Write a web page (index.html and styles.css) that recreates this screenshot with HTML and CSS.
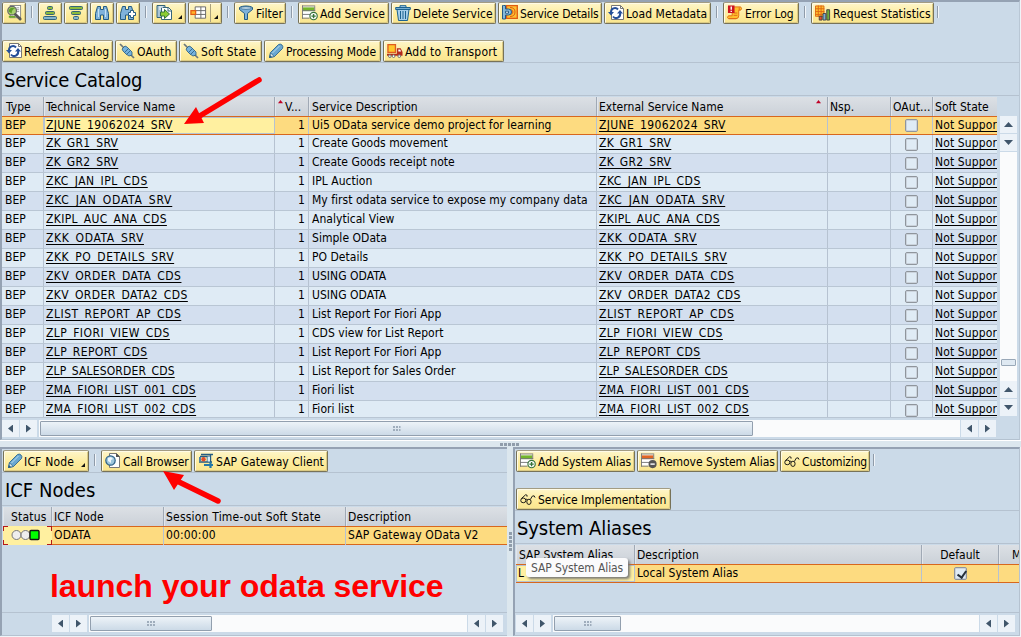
FILE: index.html
```html
<!DOCTYPE html>
<html lang="en">
<head>
<meta charset="utf-8">
<title>Service Catalog</title>
<link rel="stylesheet" href="styles.css">
</head>
<body>
<svg class="defs" width="0" height="0">
  <symbol id="details" viewBox="0 0 17 17"><rect x="4.500" y=".5" width="11" height="13" fill="#fff" stroke="#888"/><path d="M11 3h3M11 5h3M11 7h3" stroke="#999"/><path d="M3 12.500h7" stroke="#6aa829" stroke-width="2"/><circle cx="6.500" cy="6" r="4.600" fill="#a8d070" stroke="#666" stroke-width="1.300"/><path d="M3 7q0-4 4-4l3 1q-4 0-4 5z" fill="#5e9e28"/><path d="M10 10l5 5" stroke="#555" stroke-width="3" stroke-linecap="round"/></symbol>
  <symbol id="asc" viewBox="0 0 16 16"><g fill="#8cbb3b" stroke="#35657a"><rect x="5.500" y="1.500" width="5" height="3" rx="1"/><rect x="3.500" y="6.500" width="9" height="3" rx="1"/><rect x="1.500" y="11.500" width="13" height="3" rx="1" fill="#86b4cd"/></g></symbol>
  <symbol id="desc" viewBox="0 0 16 16"><g fill="#8cbb3b" stroke="#35657a"><rect x="1.500" y="1.500" width="13" height="3" rx="1"/><rect x="3.500" y="6.500" width="9" height="3" rx="1"/><rect x="5.500" y="11.500" width="5" height="3" rx="1" fill="#86b4cd"/></g></symbol>
  <symbol id="find" viewBox="0 0 16 16"><path d="M3.500 1.500h3v3h3v-3h3l2 7v6h-5v-4.500h-3v4.500h-5v-6z" fill="#7fb2da" stroke="#245b82" stroke-linejoin="round"/><path d="M4.500 4v8M11.500 4v8" stroke="#c5e1f4"/></symbol>
  <symbol id="findnext" viewBox="0 0 16 16"><path d="M2.500 1.500h3v3h3v-3h3l2 7v6h-5v-4.500h-3v4.500h-5v-6z" fill="#7fb2da" stroke="#245b82" stroke-linejoin="round"/><path d="M10.500 5.500h3v2h2v3h-2v2h-3v-2h-2v-3h2z" fill="#fff" stroke="#245b82"/></symbol>
  <symbol id="export" viewBox="0 0 17 16"><path d="M1 .5h8v12h-8z" fill="#a8c4d6" stroke="#35657a"/><path d="M5.500 2.500h7l3 3v9h-10z" fill="#fff" stroke="#35657a"/><path d="M12 2v4h4" fill="none" stroke="#35657a"/><path d="M3 2h4M3 4h2" stroke="#fff"/><path d="M4.500 7h4V4.500l5 4.500-5 4.500V11h-4z" fill="#8ccc32" stroke="#35733a"/></symbol>
  <symbol id="layout" viewBox="0 0 18 16"><path d="M5.500 1.500h11v12h-11zM5.500 5.500h11M5.500 9.500h11M11.500 1.500v12" fill="#fff" stroke="#666"/><rect x="1" y="5.500" width="5" height="4" fill="#ffb528" stroke="#e35a12" stroke-width="1.300"/></symbol>
  <symbol id="filter" viewBox="0 0 16 16"><path d="M1.500 2.500c3-2 10-2 13 0v2l-5 4v6h-3v-6l-5-4z" fill="#7fb2da" stroke="#245b82"/><ellipse cx="8" cy="3" rx="5.500" ry="1.300" fill="#cce2f0" stroke="#245b82" stroke-width=".7"/></symbol>
  <symbol id="add" viewBox="0 0 17 16"><path d="M1 1h12v12H1z" fill="#fff"/><path d="M1 2h12v4H1z" fill="#73b52b"/><path d="M0 .5h14M0 5.500h14M.5 0v14M0 9.500h9M0 13.500h8M13.500 1v5" stroke="#777"/><circle cx="12.300" cy="11.300" r="3.900" fill="#fff" stroke="#35733a" stroke-width="1.200"/><path d="M12.300 9v4.600M10 11.300h4.600" stroke="#35733a" stroke-width="1.500"/></symbol>
  <symbol id="remove" viewBox="0 0 17 16"><path d="M1 1h12v12H1z" fill="#fff"/><path d="M1 2h12v4H1z" fill="#e06423"/><path d="M0 .5h14M0 5.500h14M.5 0v14M0 9.500h9M0 13.500h8M13.500 1v5" stroke="#777"/><circle cx="12.300" cy="11.300" r="4.300" fill="#555"/><path d="M10 11.300h4.600" stroke="#fff" stroke-width="1.500"/></symbol>
  <symbol id="trash" viewBox="0 0 16 16"><path d="M5 2V.7h6V2M2 4.500h12l-1.500 11h-9z" fill="#a6cfea" stroke="#1b628f"/><path d="M.7 2.500h14.600v2H.7z" fill="#76aed2" stroke="#1b628f"/><path d="M5.500 6v8M8 6v8M10.500 6v8" stroke="#1b628f"/></symbol>
  <symbol id="service" viewBox="0 0 16 16"><path d="M4.500.7h10.800v12.600H4.500z" fill="#fdbf2f" stroke="#e05a12" stroke-width="1.300"/><path d="M8 2.500q5 0 5 4.500t-5 4.500M7 4.500q4 0 4 2.500t-4 2.500" fill="none" stroke="#e05a12"/><path d="M1.500.5h2v3.500h3q3 0 3 3t-3 3h-3v4h-3V.5z" fill="#85b9d9" stroke="#245b82"/><path d="M3.500 6.200h3v2h-3z" fill="#fff" stroke="#245b82"/></symbol>
  <symbol id="refresh" viewBox="0 0 16 16"><path d="M3.500.5h9l3 3v11h-12z" fill="#fff" stroke="#777"/><path d="M12.500.5v3h3" fill="none" stroke="#777"/><path d="M3 7.500a4 4 0 0 1 7-3M12 8a4 4 0 0 1-7 3.500" fill="none" stroke="#244f99" stroke-width="2"/><path d="M0 7h6l-3 3.500zM9 8.500h6L12 5z" fill="#244f99"/></symbol>
  <symbol id="plug" viewBox="0 0 16 16"><path d="M1 1l14 14" stroke="#6a777b" stroke-width="1.700"/><path d="M3 6l3-3 2 1 2 2 3 3 0 3-3 1-3-2-3-3z" fill="#76b2dc" stroke="#245b82" stroke-width=".8"/><path d="M5.500 9.500l4-4M7.500 11.500l4-4" stroke="#245b82" stroke-width=".8"/></symbol>
  <symbol id="pencil" viewBox="0 0 16 16"><path d="M1.500 14.500l1-5 8-8q2-1 3.500.5t.5 3.500l-8 8z" fill="#6aa7d1" stroke="#2c668f" stroke-width=".9"/><path d="M4.500 10l7-7" stroke="#b7dcf0"/><path d="M2.500 9.800l3.700 3.700-4.500 1z" fill="#dfeaf0" stroke="#245b82" stroke-width=".7"/><path d="M1 15l1-3 2 2z" fill="#245b82"/></symbol>
  <symbol id="truck" viewBox="0 0 17 16"><path d="M1 1.200h8v8.300H1z" fill="#ffc72c" stroke="#e05b20" stroke-width="1.400"/><path d="M10.500 5h4l2 4v4H0v-2h10.500z" fill="#b52c1d"/><path d="M12 6.500h2l1 2h-3z" fill="#fff"/><g fill="#fff" stroke="#666"><circle cx="3" cy="13.500" r="1.400"/><circle cx="7" cy="13.500" r="1.400"/><circle cx="13" cy="13.500" r="1.400"/></g></symbol>
  <symbol id="log" viewBox="0 0 17 16"><path d="M7.500 1.500h7q2 2 0 3.500h-2v6q0 3-3 3h-8q-2-1 0-3h4v-6" fill="#ffc02d" stroke="#e06a13"/><path d="M7 8h4M7 10.500h4M2 14h8M13 2v3" stroke="#e06a13"/><path d="M1 0h7v8H1z" fill="#cc1420"/><path d="M4.500 1v3.500M4.500 5.500v1.500" stroke="#fff" stroke-width="1.500"/></symbol>
  <symbol id="stats" viewBox="0 0 17 16"><path d="M.5.5h9v11h-9z" fill="#ffc02d" stroke="#df6812"/><path d="M3.500 0v12M6.500 0v12M0 3.500h10M0 6.500h10M0 9.500h10" stroke="#df6812"/><g stroke="#444"><path d="M4.500 11.500h3v4h-3z" fill="#ed4726"/><path d="M8.500 8.500h3v7h-3z" fill="#76aedb"/><path d="M12.500 4.500h3v11h-3z" fill="#6fae3b"/></g></symbol>
  <symbol id="browser" viewBox="0 0 16 16"><path d="M4.500.5h7l3 3v11h-10z" fill="#fff" stroke="#777"/><path d="M11 0v4h4z" fill="#555"/><circle cx="5.500" cy="7.500" r="4.700" fill="#9dc6dd" stroke="#2c6088" stroke-width="1.200"/><path d="M3 5l3-1 2 2-2 1v3l-3-2z" fill="#eef7fb"/></symbol>
  <symbol id="gateway" viewBox="0 0 16 16"><path d="M3 1.500h12M1 9h13M12.500 1v9M9.500 3v6M2 3.500h11" stroke="#245b82" stroke-width="1.400"/><path d="M9.500 3.500h2.500v5H9.500z" fill="#d9edf6"/><path d="M1 4h2v4H1z" fill="#4d86aa"/><circle cx="5.500" cy="6.200" r="2.200" fill="#de4c2b"/><path d="M6 12h9M12.500 9v6" stroke="#2477a7" stroke-width="2.200"/></symbol>
  <symbol id="glasses" viewBox="0 0 17 16"><g fill="none" stroke="#111" stroke-width="1"><ellipse cx="3.500" cy="9.500" rx="2.700" ry="2.500"/><ellipse cx="9.500" cy="11" rx="2.300" ry="2.800"/><path d="M1.500 7.500L6 3.500l1.500.5v1.500M6 8.500q1.500-1 2 .5M11 8.500l2-3.500q2.500-1.500 3 1.500"/></g></symbol>
</svg>

<main class="app">
  <section class="pane catalog">
    <div class="toolbar">
      <button class="btn sq"><svg><use href="#details"/></svg></button><i class="sep"></i>
      <button class="btn sq"><svg><use href="#asc"/></svg></button>
      <button class="btn sq"><svg><use href="#desc"/></svg></button>
      <button class="btn sq"><svg><use href="#find"/></svg></button>
      <button class="btn sq"><svg><use href="#findnext"/></svg></button><i class="sep"></i>
      <button class="btn menu w34"><svg class="wide"><use href="#export"/></svg></button>
      <button class="btn menu split w34"><svg class="wide"><use href="#layout"/></svg></button><i class="sep"></i>
      <button class="btn w52"><svg><use href="#filter"/></svg><span>Filter</span></button><i class="sep"></i>
      <button class="btn w91"><svg><use href="#add"/></svg><span>Add Service</span></button>
      <button class="btn w105"><svg><use href="#trash"/></svg><span>Delete Service</span></button>
      <button class="btn w104 tight"><svg><use href="#service"/></svg><span>Service Details</span></button>
      <button class="btn w107"><svg><use href="#refresh"/></svg><span>Load Metadata</span></button><i class="sep"></i>
      <button class="btn w76 snug"><svg><use href="#log"/></svg><span>Error Log</span></button><i class="sep"></i>
      <button class="btn w123"><svg><use href="#stats"/></svg><span>Request Statistics</span></button><i class="sep last"></i>
    </div>
    <div class="toolbar second">
      <button class="btn w111 snug"><svg><use href="#refresh"/></svg><span>Refresh Catalog</span></button>
      <button class="btn w62 loose"><svg><use href="#plug"/></svg><span>OAuth</span></button>
      <button class="btn w83 loose"><svg><use href="#plug"/></svg><span>Soft State</span></button>
      <button class="btn w117 snug"><svg><use href="#pencil"/></svg><span>Processing Mode</span></button>
      <button class="btn w121 loose"><svg><use href="#truck"/></svg><span>Add to Transport</span></button>
    </div>
    <h1>Service Catalog</h1>
    <div class="grid-wrap">
      <div class="table services" id="services">
        <div class="row head"><div>Type</div><div>Technical Service Name</div><div class="ver"><i class="sort"></i>V...</div><div>Service Description</div><div class="ext">External Service Name<i class="sort"></i></div><div>Nsp.</div><div>OAut...</div><div>Soft State</div></div>
      </div>
      <div class="vscroll"><b class="up"></b><b class="down"></b><span class="vtrack"><i></i></span><b class="up"></b><b class="down"></b></div>
    </div>
    <div class="hscroll top"><b class="left"></b><b class="right"></b><span class="track"><i class="thumb"></i></span><b class="left"></b><b class="right"></b></div>
  </section>

  <div class="splitter"><i></i></div>

  <div class="bottom">
    <section class="pane nodes">
      <div class="toolbar">
        <button class="btn menu w86 loose"><svg><use href="#pencil"/></svg><span class="inset">ICF Node</span></button><i class="sep"></i>
        <button class="btn w91 tight"><svg><use href="#browser"/></svg><span>Call Browser</span></button>
        <button class="btn w134"><svg><use href="#gateway"/></svg><span>SAP Gateway Client</span></button>
      </div>
      <h1>ICF Nodes</h1>
      <div class="table icf">
        <div class="row head"><div>Status</div><div>ICF Node</div><div>Session Time-out Soft State</div><div>Description</div></div>
        <div class="row sel"><div class="edit focus"><svg class="lights" viewBox="0 0 30 12"><circle cx="5.500" cy="6" r="4.500"/><circle cx="14.500" cy="6" r="4.500"/><rect x="19" y="1.500" width="9" height="9" rx="1"/></svg></div><div>ODATA</div><div>00:00:00</div><div>SAP Gateway OData V2</div></div>
      </div>
      <p class="note">launch your odata service</p>
      <div class="hscroll"><b class="left"></b><b class="right"></b><span class="track"><i class="thumb"></i></span><b class="left"></b><b class="right"></b></div>
    </section>
    <div class="vsplit"><i></i></div>
    <section class="pane aliases">
      <div class="toolbar">
        <button class="btn w119 snug"><svg><use href="#add"/></svg><span>Add System Alias</span></button>
        <button class="btn w141 snug"><svg><use href="#remove"/></svg><span>Remove System Alias</span></button>
        <button class="btn w90 tight"><svg><use href="#glasses"/></svg><span>Customizing</span></button><i class="sep last"></i>
      </div>
      <div class="toolbar second">
        <button class="btn w155 snug"><svg><use href="#glasses"/></svg><span>Service Implementation</span></button>
      </div>
      <h1>System Aliases</h1>
      <div class="table alias">
        <div class="row head"><div>SAP System Alias</div><div>Description</div><div>Default</div><div>M</div></div>
        <div class="row sel"><div class="edit">L</div><div>Local System Alias</div><div><i class="check on"></i></div><div></div></div>
        <div class="tooltip">SAP System Alias</div>
      </div>
      <div class="hscroll"><b class="left"></b><b class="right"></b><span class="track"><i class="thumb"></i></span><b class="left"></b><b class="right"></b></div>
    </section>
  </div>
  <svg class="arrows" viewBox="0 0 1021 637"><path d="M259 80L198 117M218 501L177 481"/><path class="tip" d="M184 124L204 123L196 107ZM163 471L174 490L184 475Z"/></svg>
</main>
<script src="services.js"></script>
</body>
</html>
```
FILE: services.js
```js
// name, description, letter spacing of the name in px
const services = [
  ["ZJUNE_19062024_SRV", "Ui5 OData service demo project for learning", .37],
  ["ZK_GR1_SRV", "Create Goods movement", .32],
  ["ZK_GR2_SRV", "Create Goods receipt note", .32],
  ["ZKC_JAN_IPL_CDS", "IPL Auction", .49],
  ["ZKC_JAN_ODATA_SRV", "My first odata service to expose my company data", .77],
  ["ZKIPL_AUC_ANA_CDS", "Analytical View", .36],
  ["ZKK_ODATA_SRV", "Simple OData", .65],
  ["ZKK_PO_DETAILS_SRV", "PO Details", .56],
  ["ZKV_ORDER_DATA_CDS", "USING ODATA", .47],
  ["ZKV_ORDER_DATA2_CDS", "USING ODATA", .42],
  ["ZLIST_REPORT_AP_CDS", "List Report For Fiori App", .52],
  ["ZLP_FIORI_VIEW_CDS", "CDS view for List Report", .47],
  ["ZLP_REPORT_CDS", "List Report For Fiori App", .39],
  ["ZLP_SALESORDER_CDS", "List Report for Sales Order", .14],
  ["ZMA_FIORI_LIST_001_CDS", "Fiori list", .45],
  ["ZMA_FIORI_LIST_002_CDS", "Fiori list", .45]
];
document.getElementById("services").insertAdjacentHTML("beforeend", services.map(([name, text, spacing], i) => {
  const link = `<u style="letter-spacing:${spacing}px">${name}</u>`;
  return `<div class="row${i === 0 ? " sel" : ""}"><div>BEP</div><div class="${i === 0 ? "edit" : ""}">${link}</div><div class="num">1</div><div>${text}</div><div>${link}</div><div></div><div class="box"><i class="check"></i></div><div><u class="state">Not Suppor</u></div></div>`;
}).join(""));
```
FILE: styles.css
```css
* { box-sizing: border-box; }
body { margin: 0; width: 1021px; height: 637px; overflow: hidden; background: #f0f4f8; color: #000; font: 12px/18px "DejaVu Sans Condensed", "DejaVu Sans", sans-serif; }
.defs { position: absolute; }
.app { position: relative; width: 1021px; height: 637px; display: flex; flex-direction: column; }
.pane { background: #cbdae8; border-left: 2px solid #95a2b3; border-top: 2px solid #95a2b3; display: flex; flex-direction: column; overflow: hidden; }
.catalog { width: 1020px; height: 440px; border-right: 1px solid #b9c7d5; border-bottom: 1px solid #b4c2d0; flex: none; }

.toolbar { display: flex; gap: 2px; height: 22px; flex: none; }
.toolbar.second { margin-top: 16px; }
.btn { font: inherit; color: #000; height: 22px; padding: 0 0 0 3px; border: 1px solid #777258; border-top-color: #a39c83; border-radius: 2px; background: linear-gradient(#fef6ca, #fdeb9b 60%, #fae68f); box-shadow: inset 1px 1px #fffbe6, inset -1px -1px #dbca83; display: flex; align-items: center; gap: 2px; white-space: nowrap; flex: none; position: relative; letter-spacing: .06px; }
.btn.tight { letter-spacing: -.15px; }
.btn.snug { letter-spacing: -.03px; }
.btn.loose { letter-spacing: .2px; }
.btn span { padding-top: 1px; }
.btn .inset { margin-left: -1px; }
.btn svg { width: 16px; height: 16px; flex: none; }
.btn svg.wide { width: 17px; }
.sq { width: 24px; }
.w34 { width: 34px; } .w52 { width: 52px; } .w62 { width: 62px; } .w76 { width: 76px; } .w83 { width: 83px; } .w86 { width: 86px; }
.w90 { width: 90px; } .w91 { width: 91px; } .w104 { width: 104px; } .w105 { width: 105px; } .w107 { width: 107px; } .w111 { width: 111px; }
.w117 { width: 117px; } .w119 { width: 119px; } .w121 { width: 121px; } .w123 { width: 123px; } .w134 { width: 134px; } .w141 { width: 141px; } .w155 { width: 155px; }
.menu::after { content: ""; position: absolute; right: 3px; bottom: 4px; border: 2px solid; border-color: transparent #111 #111 transparent; }
.split { background: linear-gradient(90deg, transparent 21px, #aaa27d 21px, #aaa27d 22px, transparent 22px), linear-gradient(#fef6ca, #fae68f); padding-left: 1px; }
.sep { width: 2px; height: 12px; margin: 4px 3px 0; border-left: 1px solid #8f9ba9; border-right: 1px solid #f1f5f9; }
.sep.last { margin-left: 1px; }

h1 { margin: 0; padding: 0 0 0 2px; height: 34px; border-top: 1px solid #b5c2d0; border-bottom: 1px solid #b5c2d0; font: 20px/34px "DejaVu Sans Condensed", sans-serif; letter-spacing: -.2px; flex: none; }
.grid-wrap { display: flex; margin-top: 1px; height: 320px; flex: none; gap: 3px; }
.table { overflow: hidden; flex: none; }
.services { width: 995px; height: 321px; border-bottom: 1px solid #b9c6d4; }
.row { display: grid; height: 19px; background: #d3dfef; border-bottom: 1px solid #b9c6d4; line-height: 17px; }
.row:nth-child(odd) { background: #dfebf5; }
.row > div { padding-left: 3px; border-right: 1px solid #b6c2d1; white-space: nowrap; overflow: hidden; min-width: 0; letter-spacing: .03px; }
.row > div:last-child { border-right: 0; }
.services .row { grid-template-columns: 42px 231px 34px 288px 231px 63px 42px 64px; }
.row.head { height: 19px; line-height: 20px; background: linear-gradient(#dce0e5, #cbd1d8); border: 0; }
.row.head > div { border-right-color: #a0a9b5; box-shadow: inset 1px 0 #e2e6eb; }
.services .head > div { padding-left: 2px; letter-spacing: .05px; }
.services .head > div:first-child { padding-left: 4px; }
.services .head > div:nth-child(4) { padding-left: 3px; }
.row.sel { background: #fddb80; border-top: 1px solid #d8671d; border-bottom: 1px solid #d8671d; line-height: 16px; }
.row .edit { background: #fff0a0; border: 1px solid #b6c2d1; padding-left: 1px; line-height: 15px; }
.services .row > div:nth-child(5), .services .row > div:nth-child(8), .services .row:not(.sel) > div:nth-child(2) { padding-left: 2px; }
.services .num { text-align: right; padding-right: 3px; }
.row .box { padding: 0; display: flex; justify-content: center; align-items: center; }
u { text-underline-offset: 2px; text-decoration-thickness: 1px; text-decoration-skip-ink: none; }
u.state { letter-spacing: .12px; }
.ver, .ext { display: flex; }
.ext { justify-content: space-between; }
.services .head .ext { padding-right: 6px; }
.sort { margin-top: 3px; width: 5px; height: 4px; background: #c00025; clip-path: polygon(50% 0, 100% 80%, 0 80%); }
.ver .sort { margin: 3px 2px 0 1px; }
.check { display: block; width: 13px; height: 13px; flex: none; border: 1px solid #8f959c; border-radius: 2px; background: #dfebf5; box-shadow: inset 0 0 0 1px #cbd3dc; }
.check.on { position: relative; }
.check.on::after { content: ""; position: absolute; left: 4px; top: 1px; width: 4px; height: 7px; border: solid #26303a; border-width: 0 2px 2px 0; transform: rotate(35deg); }

.vscroll { width: 17px; padding-top: 19px; display: flex; flex-direction: column; }
.vscroll b, .hscroll b { width: 17px; height: 17px; margin-bottom: 1px; background: #ecf2f8; display: grid; place-items: center; flex: none; }
b::after { content: ""; width: 9px; height: 5px; background: #40566b; clip-path: polygon(50% 0, 100% 100%, 0 100%); }
b.down::after { transform: rotate(180deg); }
b.left::after { width: 5px; height: 8px; clip-path: polygon(100% 0, 100% 100%, 0 50%); }
b.right::after { width: 5px; height: 8px; clip-path: polygon(0 0, 100% 50%, 0 100%); }
.vtrack { flex: 1; background: #fafbfc; display: block; padding: 207px 1px 0; }
.vtrack i { display: block; height: 7px; border: 1px solid #99a8b8; background: #dfe9f2; border-radius: 1px; }
.hscroll { display: flex; gap: 1px; height: 17px; flex: none; }
.hscroll .track { background: #fafbfc; padding: 1px 1px; margin-left: 1px; }
.thumb { display: block; height: 15px; border: 1px solid #929fae; border-radius: 1px; background: linear-gradient(#edf3f8, #ccdae7); position: relative; }
.thumb::after { content: ""; position: absolute; left: calc(50% - 4px); top: 4px; width: 8px; height: 5px; background: repeating-linear-gradient(90deg, #9fadbc 0 2px, transparent 2px 3px); clip-path: polygon(0 0, 100% 0, 100% 40%, 0 40%, 0 60%, 100% 60%, 100% 100%, 0 100%); }
.top { margin-top: 3px; }
.top .track { width: 921px; }
.top .thumb { width: 713px; }

.splitter { height: 7px; flex: none; background: linear-gradient(#fff 1px, #dce7ee 1px); padding: 3px 0 0 500px; }
.splitter i { display: block; width: 19px; height: 3px; background: repeating-linear-gradient(90deg, #909dab 0 3px, transparent 3px 4px); }
.bottom { display: flex; height: 189px; flex: none; }
.bottom .pane { border-bottom: 1px solid #b5c2d0; }
.bottom .toolbar { margin-top: 1px; }
.bottom .toolbar.second { margin-top: 16px; }
.nodes { width: 507px; }
.nodes .toolbar { padding-left: 1px; }
.nodes .table { margin-top: 1px; border-left: 1px solid transparent; }
.icf .row { grid-template-columns: 49px 112px 182px 1fr; }
.icf .row > div { padding-left: 2px; letter-spacing: .15px; }
.icf .head > div:nth-child(3) { letter-spacing: .2px; }
.icf .head > div:first-child { padding-left: 8px; letter-spacing: .2px; }
.icf .row .focus { padding: 3px 0 0 8px; border: 0; margin-top: -1px; height: 19px; background:
  linear-gradient(#b51818, #b51818) 0 0/5px 1px, linear-gradient(#b51818, #b51818) 0 0/1px 5px,
  linear-gradient(#b51818, #b51818) 100% 0/5px 1px, linear-gradient(#b51818, #b51818) 100% 0/1px 5px,
  linear-gradient(#b51818, #b51818) 0 100%/5px 1px, linear-gradient(#b51818, #b51818) 0 100%/1px 5px,
  linear-gradient(#b51818, #b51818) 100% 100%/5px 1px, linear-gradient(#b51818, #b51818) 100% 100%/1px 5px, #fff0a0; background-repeat: no-repeat; }
.lights { width: 30px; height: 12px; display: block; }
.lights circle { fill: #eee; stroke: #777; }
.lights rect { fill: #0f0; stroke: #111; stroke-width: 1.400; }
.nodes h1 { padding-left: 3px; letter-spacing: 0; }
.aliases h1 { letter-spacing: -.1px; }
.note { margin: 0; padding-left: 48px; height: 68px; border-bottom: 1px solid #b5c2d0; color: #f00; font: bold 32px/82px "Liberation Sans", sans-serif; letter-spacing: -.05px; flex: none; white-space: nowrap; }
.nodes .hscroll { padding-left: 50px; margin-top: 2px; }
.nodes .track { width: 378px; }
.nodes .thumb { width: 122px; }
.vsplit { width: 6px; background: #dce7ee; padding: 85px 0 0 2px; }
.vsplit i { display: block; width: 3px; height: 19px; background: repeating-linear-gradient(#909dab 0 3px, transparent 3px 4px); }
.aliases { width: 507px; border-right: 1px solid #b5c2d0; }
.aliases .toolbar { padding-left: 1px; }
.alias { margin-top: 1px; height: 68px; border-bottom: 1px solid #b5c2d0; padding-left: 1px; position: relative; }
.alias .row { grid-template-columns: 119px 287px 77px 1fr; }
.alias .row > div:nth-child(2) { padding-left: 2px; }
.alias .row > div:nth-child(3) { padding: 0; display: flex; justify-content: center; align-items: center; }
.alias .row > div:nth-child(4) { padding-left: 13px; }
.tooltip { position: absolute; left: 11px; top: 13px; width: 102px; height: 19px; border-radius: 3px; background: #fbfbfc; color: #555; line-height: 20px; padding-left: 5px; letter-spacing: -.1px; white-space: nowrap; box-shadow: 2px 2px 3px #777; }
.aliases .hscroll { margin-top: 2px; padding-left: 1px; }
.aliases .track { width: 426px; }
.aliases .thumb { width: 67px; }
.arrows { position: absolute; left: 0; top: 0; width: 1021px; height: 637px; pointer-events: none; fill: none; stroke: #f00; stroke-width: 5.500; stroke-linecap: round; }
.arrows .tip { fill: #f00; stroke: none; }
```
